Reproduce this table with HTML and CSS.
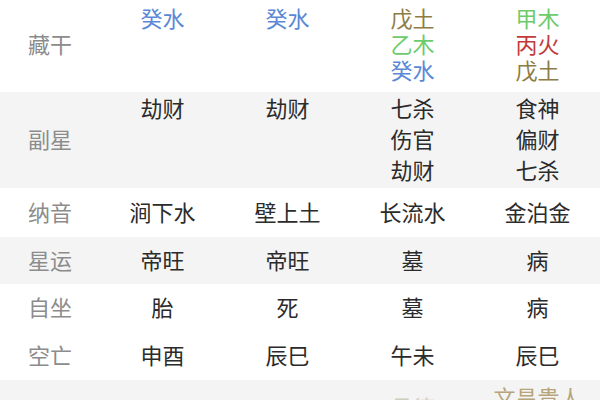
FILE: index.html
```html
<!DOCTYPE html>
<html lang="zh-CN">
<head>
<meta charset="utf-8">
<title>八字</title>
<link rel="stylesheet" href="styles.css">
</head>
<body>
<div class="table">
  <div class="row row-cang">
    <div class="label">藏干</div>
    <div class="cell"><span class="water">癸水</span></div>
    <div class="cell"><span class="water">癸水</span></div>
    <div class="cell"><span class="earth">戊土</span><br><span class="wood">乙木</span><br><span class="water">癸水</span></div>
    <div class="cell"><span class="wood">甲木</span><br><span class="fire">丙火</span><br><span class="earth">戊土</span></div>
  </div>
  <div class="row row-fu gray">
    <div class="label">副星</div>
    <div class="cell">劫财</div>
    <div class="cell">劫财</div>
    <div class="cell">七杀<br>伤官<br>劫财</div>
    <div class="cell">食神<br>偏财<br>七杀</div>
  </div>
  <div class="row single h49">
    <div class="label">纳音</div>
    <div class="cell">涧下水</div>
    <div class="cell">壁上土</div>
    <div class="cell">长流水</div>
    <div class="cell">金泊金</div>
  </div>
  <div class="row single h47 gray">
    <div class="label">星运</div>
    <div class="cell">帝旺</div>
    <div class="cell">帝旺</div>
    <div class="cell">墓</div>
    <div class="cell">病</div>
  </div>
  <div class="row single h48">
    <div class="label">自坐</div>
    <div class="cell">胎</div>
    <div class="cell">死</div>
    <div class="cell">墓</div>
    <div class="cell">病</div>
  </div>
  <div class="row single h48">
    <div class="label">空亡</div>
    <div class="cell">申酉</div>
    <div class="cell">辰巳</div>
    <div class="cell">午未</div>
    <div class="cell">辰巳</div>
  </div>
  <div class="row row-shen gray">
    <div class="label">神煞</div>
    <div class="cell"></div>
    <div class="cell"></div>
    <div class="cell shen shen-low">月德</div>
    <div class="cell shen">文昌贵人</div>
  </div>
</div>
</body>
</html>
```

FILE: styles.css
```css
html, body {
  margin: 0;
  padding: 0;
  background: #ffffff;
  overflow: hidden;
}

body {
  width: 600px;
  height: 400px;
  font-family: "Noto Sans CJK SC", "Noto Sans", sans-serif;
  font-size: 22px;
}

.table {
  width: 600px;
}

.row {
  display: grid;
  grid-template-columns: 100px repeat(4, 125px);
  align-items: center;
}

.gray {
  background: #f4f4f4;
}

.label {
  text-align: center;
  color: #8c8c8c;
}

.cell {
  text-align: center;
  color: #2b2b2b;
}

.row-cang {
  height: 92px;
  box-sizing: border-box;
  padding: 4px 0 10px;
  line-height: 26px;
}

.row-cang .cell,
.row-fu .cell,
.row-shen .cell {
  align-self: start;
}

.row-fu {
  height: 96px;
  box-sizing: border-box;
  padding: 0 0 3px;
  line-height: 31px;
}

.single {
  line-height: 26px;
  box-sizing: border-box;
  padding-bottom: 4px;
}

.h49 { height: 49px; }
.h47 { height: 47px; }
.h48 { height: 48px; }

.row-shen {
  height: 40px;
  box-sizing: border-box;
  padding-top: 3px;
  line-height: 26px;
}

.row-shen .label {
  align-self: start;
  visibility: hidden;
}

.water { color: #5a88d6; }
.wood  { color: #6ccb6a; }
.fire  { color: #c23a3a; }
.earth { color: #8e7c45; }

.shen {
  color: #b7a47a;
}

.shen-low {
  padding-top: 10px;
  color: #d2ccc0;
}
```
